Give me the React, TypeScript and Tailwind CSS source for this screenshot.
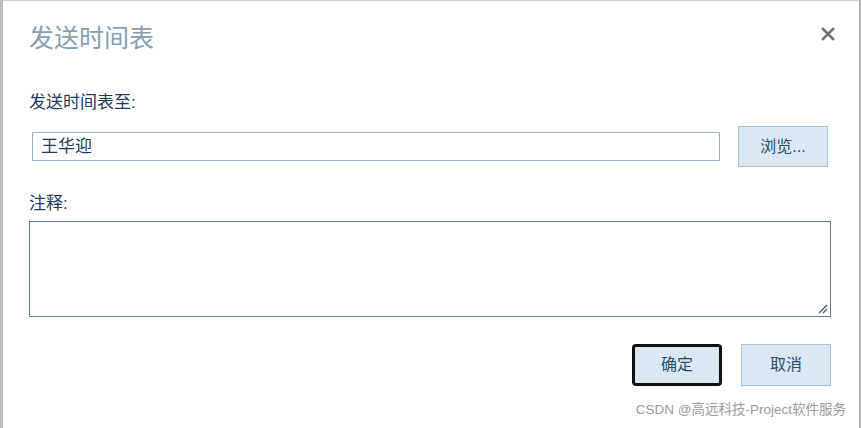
import React from 'react';

function CloseIcon() {
  return (
    <svg width="14" height="14" viewBox="0 0 14 14">
      <path d="M2 2 L12 12 M12 2 L2 12" stroke="#6e6e6e" strokeWidth="2.6" strokeLinecap="square" />
    </svg>
  );
}

export default function App() {
  return (
    <div
      className="w-[861px] h-[428px] flex bg-[#b9bec2] overflow-hidden"
      style={{ fontFamily: '"Liberation Sans", "Noto Sans CJK SC", sans-serif' }}
    >
      {/* left strip */}
      <div className="w-[3px]" />

      {/* dialog */}
      <div className="w-[856px] bg-white border-t border-[#c6d4dc] flex flex-col relative">
        {/* header */}
        <div className="flex items-start justify-between pl-[26px] pr-[20px] pt-[20px] h-[91px] shrink-0">
          <div className="text-[25px] leading-[34px] text-[#86a0b2]">发送时间表</div>
          <button className="mt-[2px] p-1">
            <CloseIcon />
          </button>
        </div>

        {/* send to */}
        <div className="pl-[26px] text-[17px] leading-[22px] text-[#1d3b5e]">发送时间表至:</div>
        <div className="flex items-center pl-[29px] mt-[12px]">
          <div className="w-[688px] h-[29px] border border-[#9db3c3] flex items-center pl-[8px] text-[17px] text-[#1d3b5e]">
            王华迎
          </div>
          <button className="ml-[18px] w-[90px] h-[41px] bg-[#dae8f3] border border-[#9ec3da] text-[16px] text-[#2b4b6b]">
            浏览...
          </button>
        </div>

        {/* note */}
        <div className="pl-[26px] mt-[26px] text-[17px] leading-[22px] text-[#1d3b5e]">注释:</div>
        <div className="pl-[26px] mt-[6px]">
          <div className="w-[802px] h-[96px] border border-[#5f7f95] relative">
            <svg className="absolute right-[2px] bottom-[2px]" width="12" height="12" viewBox="0 0 12 12">
              <path d="M11 3 L3 11 M11 7 L7 11" stroke="#555" strokeWidth="1.3" />
            </svg>
          </div>
        </div>

        {/* buttons */}
        <div className="flex justify-end gap-[19px] pr-[28px] mt-[27px]">
          <button className="w-[90px] h-[42px] bg-[#dae8f3] border-[3px] border-[#111] rounded-[4px] text-[16px] text-[#2b4b6b]">
            确定
          </button>
          <button className="w-[90px] h-[42px] bg-[#dae8f3] border border-[#9ec3da] text-[16px] text-[#2b4b6b]">
            取消
          </button>
        </div>

        {/* watermark */}
        <div className="absolute right-[13px] bottom-[8px] text-[13.5px] text-[#9a9a9a]">
          CSDN @高远科技-Project软件服务
        </div>
      </div>

      {/* right strip */}
      <div className="flex-1 border-l border-[#a9adb0]" />
    </div>
  );
}
